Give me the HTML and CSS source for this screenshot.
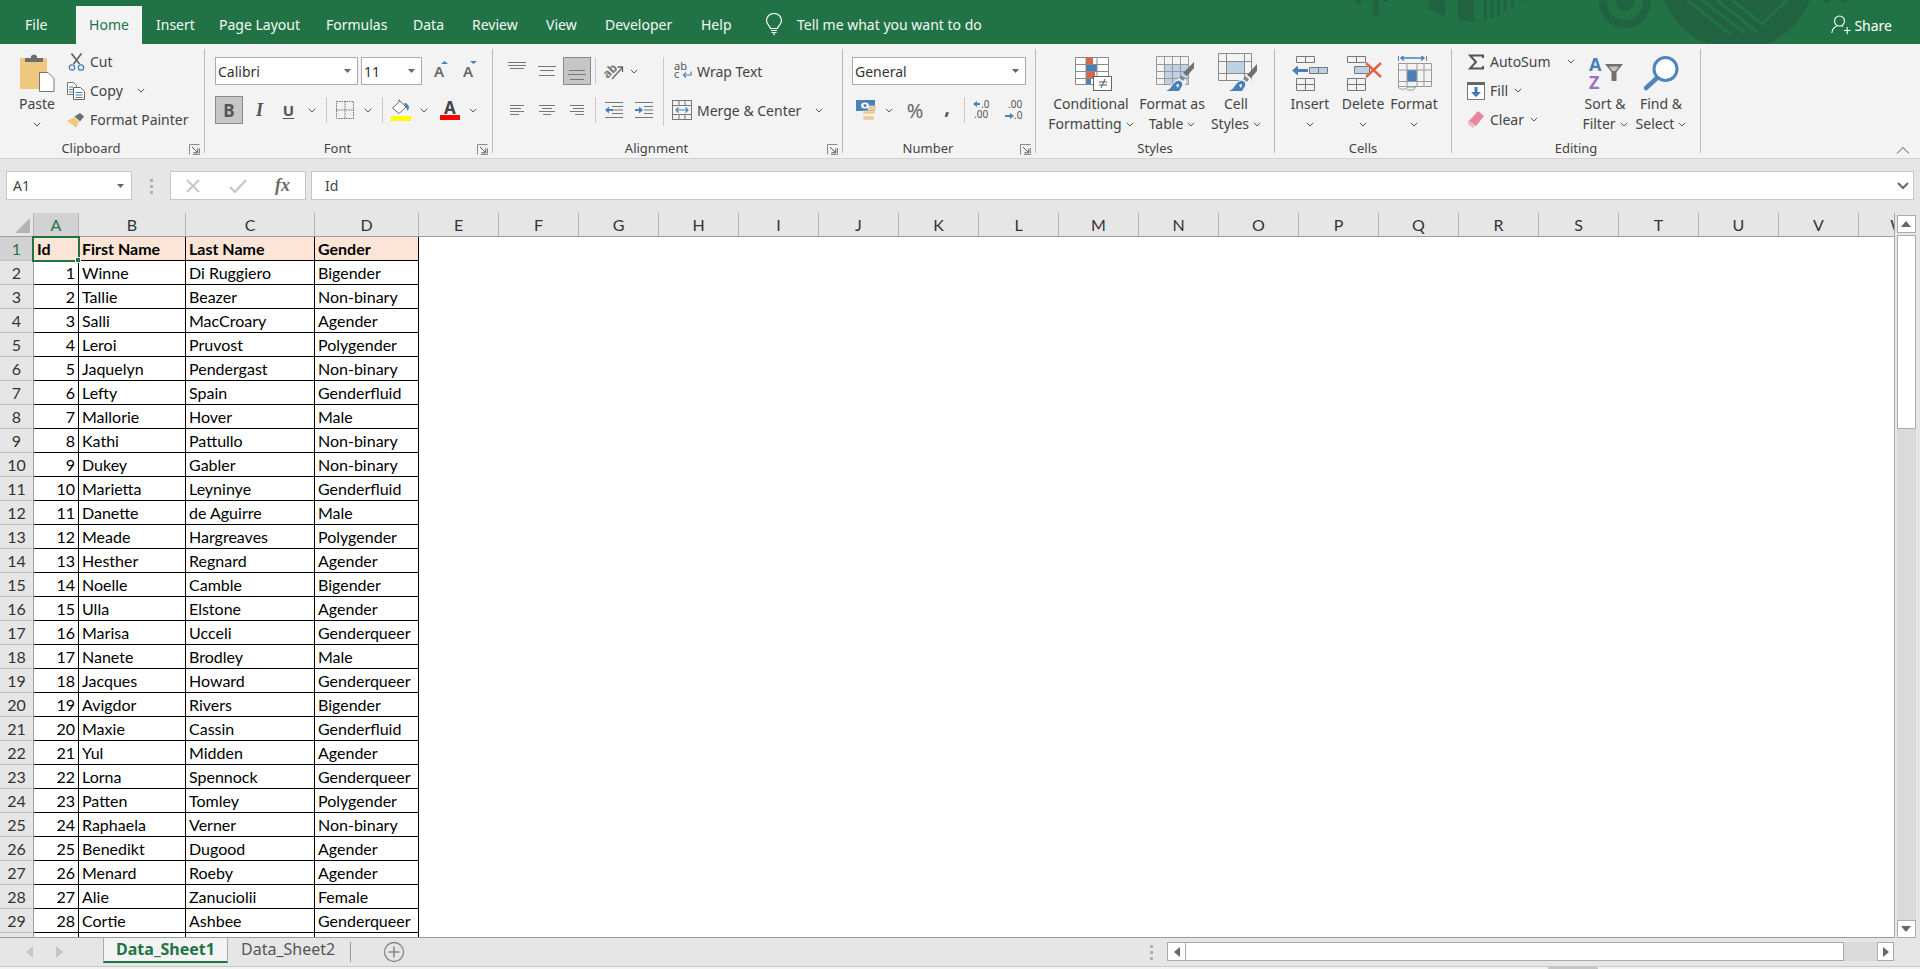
FILE: index.html
```html
<!DOCTYPE html>
<html lang="en">
<head>
<meta charset="utf-8">
<title>Data_Sheet1 - Excel</title>
<link rel="stylesheet" href="styles.css">
</head>
<body>
<svg class="defs" aria-hidden="true">
  <symbol id="chev" viewBox="0 0 8 5"><path d="M.8.8 4 4 7.2.8" fill="none" stroke="#555" stroke-width="1"/></symbol>
  <symbol id="launch" viewBox="0 0 11 11"><path d="M.5 10.5V.5h10M10.5 4v6.5H4" fill="none" stroke="#8a8a8a"/><path d="M3 3l5.5 5.5M8.8 4.5v4.3H4.5" fill="none" stroke="#555"/></symbol>
  <symbol id="tri" viewBox="0 0 9 5"><path d="M0 0h9L4.5 5z" fill="#666"/></symbol>
</svg>
<div class="app">
  <header class="titlebar">
    <svg class="deco" width="1920" height="44" viewBox="0 0 1920 44" aria-hidden="true">
      <g fill="#216240">
        <rect x="1373" y="0" width="6" height="15"/><rect x="1356" y="0" width="5" height="4"/><rect x="1383" y="0" width="5" height="2"/>
        <path d="M1429 0h16v17l-16-8zM1458 0h16v22l-16-2z"/>
        <rect x="1484" width="2.5" height="20"/><rect x="1491" width="2.5" height="18"/><rect x="1497" width="2.5" height="16"/><rect x="1504" width="2.5" height="11"/><rect x="1511" width="2.5" height="8"/><rect x="1519" width="2.5" height="2"/>
        <path fill-rule="evenodd" d="M1599 2a26 26 0 1 0 52 0a26 26 0 1 0-52 0zM1607 2a18 18 0 1 1 36 0a18 18 0 1 1-36 0z"/>
        <circle cx="1625" cy="2" r="9"/>
        <circle cx="1737" cy="-28" r="78"/>
        <path d="M1823 0h8l-4 4zM1840 0h9l-5 4z"/>
      </g>
      <g stroke="#217346" stroke-width="3" fill="none">
        <path d="M1687 0l43 34M1702 0l43 33M1717 0l41 33M1732 0l30 24M1762 24l25-24"/>
      </g>
    </svg>
    <nav class="tabs">
      <span class="tab t-file">File</span>
      <span class="tab active">Home</span>
      <span class="tab t-insert">Insert</span>
      <span class="tab t-page">Page Layout</span>
      <span class="tab t-form">Formulas</span>
      <span class="tab t-data">Data</span>
      <span class="tab t-review">Review</span>
      <span class="tab t-view">View</span>
      <span class="tab t-dev">Developer</span>
      <span class="tab t-help">Help</span>
    </nav>
    <div class="tellme">
      <svg width="18" height="22" viewBox="0 0 18 22" fill="none" stroke="#fff" stroke-width="1.2"><path d="M5.5 15.5C4.8 12.5 1.5 11.5 1.5 7.5a7.5 7 0 0 1 15 0c0 4-3.300 5-4 8z"/><path d="M6 17.500h6M6.500 19.500h5M8 21.200h2"/></svg>
      <span>Tell me what you want to do</span>
    </div>
    <div class="share">
      <svg width="20" height="20" viewBox="0 0 20 20" fill="none" stroke="#fff" stroke-width="1.100"><circle cx="8.500" cy="6" r="5"/><path d="M.8 18c.5-4 2.700-6 5-7M11 11l1 .6M13 15.500h6.500M16.200 12v7.200"/></svg>
      <span>Share</span>
    </div>
  </header>

  <section class="ribbon">
    <div class="group g-clip">
      <div class="gbody">
        <div class="big w38 ml18">
          <div class="bigicon">
            <svg width="36" height="40" viewBox="0 0 36 40"><rect x="1" y="6" width="27" height="31" rx="1" fill="#efc77f"/><path d="M6 10V6h6V4q3-3 6 0v2h6v4z" fill="#6d6d6d"/><path d="M20.500 20.500h8.500l6 6v13h-14.500z" fill="#fff" stroke="#777"/></svg>
          </div>
          <span class="bl">Paste</span>
          <span class="bl"><svg class="chev"><use href="#chev"/></svg></span>
        </div>
        <div class="smallcol ml11">
          <div class="srow"><span class="sicon"><svg width="17" height="18" viewBox="0 0 17 18" fill="none"><path d="M5.500 11 13.500.5M11.500 11 3.500.5" stroke="#666" stroke-width="1.800"/><circle cx="4" cy="14.500" r="2.700" stroke="#4a80b8" stroke-width="1.300"/><circle cx="13" cy="14.500" r="2.700" stroke="#4a80b8" stroke-width="1.300"/></svg></span><span>Cut</span></div>
          <div class="srow"><span class="sicon"><svg width="18" height="18" viewBox="0 0 18 18" fill="none"><path d="M.5.500h6l3 3v9h-9z" fill="#fff" stroke="#777"/><path d="M2 5h4M2 7.500h5M2 10h5" stroke="#4a80b8"/><path d="M6.500 5.500h7l4 4v8h-11z" fill="#fff" stroke="#666"/><path d="M8.500 10.500h7M8.500 13h7M8.500 15.500h7" stroke="#4a80b8"/></svg></span><span>Copy</span><svg class="chev ml14"><use href="#chev"/></svg></div>
          <div class="srow"><span class="sicon"><svg width="18" height="16" viewBox="0 0 18 16"><path d="M0 9 7 5l5 5-3 5.500z" fill="#efc77f"/><path d="M7.500 4.500 13 1l4 3.500-4 5z" fill="#6d6d6d"/></svg></span><span>Format Painter</span></div>
        </div>
      </div>
      <div class="glabel lc">Clipboard<svg class="launcher"><use href="#launch"/></svg></div>
    </div>

    <div class="group g-font">
      <div class="gbody col pl10 pt8">
        <div class="trow">
          <div class="combo w143"><span>Calibri</span><svg class="tri"><use href="#tri"/></svg></div>
          <div class="combo w61 ml3"><span>11</span><svg class="tri"><use href="#tri"/></svg></div>
          <span class="cell w26 ml6"><svg width="18" height="24" viewBox="0 0 18 24"><path d="M9 5l3.500-3L16 5z" fill="#4a80b8"/><text x="2" y="18" class="gly">A</text></svg></span>
          <span class="cell w26 ml3"><svg width="18" height="24" viewBox="0 0 18 24"><path d="M9 2h7l-3.500 3z" fill="#4a80b8"/><text x="2" y="18" class="gly">A</text></svg></span>
        </div>
        <div class="trow mt11">
          <span class="cell w28 pressed fmt-b">B</span>
          <span class="cell w33 fmt-i">I</span>
          <span class="cell w25 fmt-u">U</span>
          <span class="cell w22"><svg class="chev"><use href="#chev"/></svg></span>
          <span class="cell w6"><i class="vsep"></i></span>
          <span class="cell w32"><svg width="18" height="18" viewBox="0 0 18 18" fill="none" stroke="#6f6f6f" stroke-dasharray="1.500 1"><rect x=".5" y=".5" width="17" height="17"/><path d="M9 0v18M0 9h18"/></svg></span>
          <span class="cell w14"><svg class="chev"><use href="#chev"/></svg></span>
          <span class="cell w14"><i class="vsep"></i></span>
          <span class="cell w24"><svg width="20" height="22" viewBox="0 0 20 22"><path d="M1.500 9 9 2l6 6-7 6.500z" fill="#fff" stroke="#666"/><path d="M7 2l2-1.500" stroke="#666"/><path d="M13 4c3 0 5 2 5 5l-1.500 3-1-3z" fill="#4a80b8"/><rect y="17" width="20" height="5" fill="#ffff00"/></svg></span>
          <span class="cell w22"><svg class="chev"><use href="#chev"/></svg></span>
          <span class="cell w30"><svg width="20" height="30" viewBox="0 0 20 30"><text x="10" y="19" class="gly2">A</text><rect y="20" width="20" height="5" fill="#ff0000"/></svg></span>
          <span class="cell w16"><svg class="chev"><use href="#chev"/></svg></span>
        </div>
      </div>
      <div class="glabel lc">Font<svg class="launcher"><use href="#launch"/></svg></div>
    </div>

    <div class="group g-align">
      <div class="gbody pl10 pt8">
        <div class="alignleft">
          <div class="trow">
            <span class="cell w28"><svg width="18" height="28" viewBox="0 0 18 28" stroke="#777"><path d="M0 5.500h18M0 8.500h18M2 11.500h14"/></svg></span>
            <span class="cell w32"><svg width="18" height="28" viewBox="0 0 18 28" stroke="#777"><path d="M0 9.500h18M2 13.500h14M1 18.500h16"/></svg></span>
            <span class="cell w28 pressed"><svg width="18" height="26" viewBox="0 0 18 26" stroke="#777"><path d="M1 12.500h16M0 16.500h18M2 21.500h14"/></svg></span>
            <span class="cell w8"><i class="vsep"></i></span>
            <span class="cell w30"><svg width="22" height="24" viewBox="0 0 22 24"><text x="0" y="17" class="gly3" transform="rotate(-45 6 13)">ab</text><path d="M9 20 19 9M14.500 8h5v5" fill="none" stroke="#666" stroke-width="1.300"/></svg></span>
            <span class="cell w10"><svg class="chev"><use href="#chev"/></svg></span>
          </div>
          <div class="trow mt11">
            <span class="cell w28"><svg width="14" height="12" viewBox="0 0 14 12" stroke="#777"><path d="M0 1.500h14M0 4.500h11M0 7.500h14M0 10.500h9"/></svg></span>
            <span class="cell w32"><svg width="16" height="12" viewBox="0 0 16 12" stroke="#777"><path d="M0 1.500h16M3 4.500h10M0 7.500h16M4 10.500h8"/></svg></span>
            <span class="cell w28"><svg width="14" height="12" viewBox="0 0 14 12" stroke="#777"><path d="M0 1.500h14M3 4.500h11M0 7.500h14M5 10.500h9"/></svg></span>
            <span class="cell w8"><i class="vsep"></i></span>
            <span class="cell w30"><svg width="18" height="16" viewBox="0 0 18 16"><path d="M0 .500h18M7 4.500h11M7 8h11M7 11.500h11M0 15.500h18" stroke="#777"/><path d="M0 8l4-3.500V7h4v2H4v2.500z" fill="#4a80b8"/></svg></span>
            <span class="cell w30"><svg width="18" height="16" viewBox="0 0 18 16"><path d="M0 .500h18M9 4.500h9M9 8h9M9 11.500h9M0 15.500h18" stroke="#777"/><path d="M8 8 4 4.500V7H0v2h4v2.500z" fill="#4a80b8"/></svg></span>
          </div>
        </div>
        <i class="vsep tall"></i>
        <div class="alignright">
          <div class="srow tbrow"><span class="wicon"><svg width="18" height="22" viewBox="0 0 18 22"><text class="gly4"><tspan x="0" y="10">ab</tspan><tspan x="0" y="18">c</tspan></text><path d="M17 11.500v3.500H10M12 12.500 9.500 15l2.500 2.500" fill="none" stroke="#4a80b8" stroke-width="1.200"/></svg></span><span>Wrap Text</span></div>
          <div class="srow tbrow mt11"><span class="wicon"><svg width="20" height="20" viewBox="0 0 20 20" fill="none"><rect x=".5" y=".5" width="19" height="19" stroke="#777"/><path d="M0 5.500h20M0 14.500h20M7 0v5M13 0v5M7 15v5M13 15v5" stroke="#777"/><path d="M4 10h12M6.500 7.500 4 10l2.500 2.500M13.500 7.500 16 10l-2.500 2.500" stroke="#4a80b8" stroke-width="1.200"/></svg></span><span>Merge &amp; Center</span><svg class="chev ml14"><use href="#chev"/></svg></div>
        </div>
      </div>
      <div class="glabel lc">Alignment<svg class="launcher"><use href="#launch"/></svg></div>
    </div>

    <div class="group g-num">
      <div class="gbody col pl9 pt8">
        <div class="trow"><div class="combo w174"><span>General</span><svg class="tri"><use href="#tri"/></svg></div></div>
        <div class="trow mt11">
          <span class="cell w28"><svg width="20" height="21" viewBox="0 0 20 21"><rect x="0" y="0" width="19" height="11" fill="#4a80b8"/><ellipse cx="9" cy="5.500" rx="4" ry="3" fill="#fff"/><circle cx="9" cy="5.500" r="1.500" fill="#4a80b8"/><path d="M7 11h12v3H7zM12 6h8v4h-8zM7 16h11v4H7z" fill="#f0c88a" stroke="#f3f3f3" stroke-width=".6"/></svg></span>
          <span class="cell w18"><svg class="chev"><use href="#chev"/></svg></span>
          <span class="cell w34 pct">%</span>
          <span class="cell w30 cma">,</span>
          <span class="cell w4"><i class="vsep"></i></span>
          <span class="cell w32"><svg width="18" height="24" viewBox="0 0 18 24"><path d="M0 6l4-3v2h3v2H4v2z" fill="#4a80b8"/><text class="gly5"><tspan x="8" y="10">.0</tspan><tspan x="1" y="20">.00</tspan></text></svg></span>
          <span class="cell w32"><svg width="18" height="24" viewBox="0 0 18 24"><path d="M0 17h5v-2l4 3-4 3v-2H0z" fill="#4a80b8"/><text class="gly5"><tspan x="3" y="10">.00</tspan><tspan x="9" y="21">.0</tspan></text></svg></span>
        </div>
      </div>
      <div class="glabel lc">Number<svg class="launcher"><use href="#launch"/></svg></div>
    </div>

    <div class="group g-styles">
      <div class="gbody pl12">
        <div class="big w86">
          <div class="bigicon"><svg width="46" height="36" viewBox="1068 56 46 36">
            <path fill="#fff" d="M1075 57h34v28h-34z"/>
            <path d="M1086 57.500h7v6.500h-7z" fill="#de6444"/><path d="M1086 64h11v7h-11z" fill="#4a80b8"/><path d="M1086 71h9v7h-9z" fill="#de6444"/><path d="M1086 78h5v7h-5z" fill="#4a80b8"/>
            <path d="M1075.500 57.500h33v27h-33zM1086 57v28M1097 57v28M1075 64.500h34M1075 71.500h34M1075 78.500h34" fill="none" stroke="#8a8a8a"/>
            <rect x="1093.500" y="76.500" width="18" height="14" fill="#fff" stroke="#666"/><path d="M1099 82h8M1099 85h8M1105 79l-4 9" stroke="#555" fill="none"/></svg></div>
          <span class="bl">Conditional</span>
          <span class="bl">Formatting <svg class="chev"><use href="#chev"/></svg></span>
        </div>
        <div class="big w66 ml5">
          <div class="bigicon"><svg width="46" height="36" viewBox="1149 56 46 36">
            <path d="M1164 64h25v21h-25z" fill="#bcd0e6"/>
            <path d="M1156.500 56.500h32v28h-32zM1164.500 56v29M1172.500 56v29M1180.500 56v29M1156 64.500h33M1156 71.500h33M1156 78.500h33" fill="none" stroke="#9a9a9a"/>
            <path d="M1163 92l17-15 6 3-2 12z" fill="#f3f3f3"/>
            <path d="M1194 62v6l-7 8-4-3z" fill="#707070"/><path d="M1181 75l4 3-2 3-4-3z" fill="#888"/>
            <path d="M1166 91c6-2 6-8 11-10 4-1 6 2 5 5l-3 5z" fill="#4a80b8"/><path d="M1176 85c1-1 3-1 3 0l-1 3z" fill="#fff"/></svg></div>
          <span class="bl">Format as</span>
          <span class="bl">Table <svg class="chev"><use href="#chev"/></svg></span>
        </div>
        <div class="big w52 ml5">
          <div class="bigicon"><svg width="46" height="40" viewBox="1213 52 46 40">
            <path d="M1226 61h18v12h-18z" fill="#bcd0e6"/>
            <path d="M1218.500 53.500h33v27h-33zM1226.500 53v28M1244.500 53v28M1218 61.500h34M1218 73.500h34" fill="none" stroke="#8a8a8a"/>
            <path d="M1226 92l17-15 9 2-4 13z" fill="#f3f3f3"/>
            <path d="M1257 64v7l-6 7-4-3z" fill="#707070"/><path d="M1245 76l4 3-2 3-4-3z" fill="#888"/>
            <path d="M1229 91c6-2 6-8 11-10 4-1 6 2 5 5l-3 5z" fill="#4a80b8"/><path d="M1239 85c1-1 3-1 3 0l-1 3z" fill="#fff"/></svg></div>
          <span class="bl">Cell</span>
          <span class="bl">Styles <svg class="chev"><use href="#chev"/></svg></span>
        </div>
      </div>
      <div class="glabel">Styles</div>
    </div>

    <div class="group g-cells">
      <div class="gbody pl15">
        <div class="big w40">
          <div class="bigicon"><svg width="46" height="36" viewBox="1287 54 46 36" fill="none">
            <path d="M1296.500 54.500h18v6h-18zM1305.500 54v6M1296.500 76.500h18v12h-18zM1305.500 76v12M1296 82.500h19" stroke="#777"/>
            <path d="M1309.500 65.500h9v6h-9zM1318.500 65.500h9v6h-9z" fill="#bcd0e6" stroke="#777"/>
            <path d="M1292 68.500l6-5v3.500h10v3h-10v3.500z" fill="#4a80b8"/></svg></div>
          <span class="bl">Insert</span>
          <span class="bl"><svg class="chev"><use href="#chev"/></svg></span>
        </div>
        <div class="big w44 ml11">
          <div class="bigicon"><svg width="46" height="36" viewBox="1340 54 46 36" fill="none">
            <path d="M1347.500 54.500h18v6h-18zM1356.500 54v6M1347.500 76.500h18v12h-18zM1356.500 76v12M1347 82.500h19" stroke="#777"/>
            <path d="M1354.500 64.500h15v7h-15z" fill="#bcd0e6" stroke="#777"/>
            <path d="M1366 61l15 14M1381 61l-15 14" stroke="#de6444" stroke-width="2.400"/></svg></div>
          <span class="bl">Delete</span>
          <span class="bl"><svg class="chev"><use href="#chev"/></svg></span>
        </div>
        <div class="big w46 ml6">
          <div class="bigicon"><svg width="46" height="36" viewBox="1391 54 46 36" fill="none">
            <path d="M1398.500 53v6M1426.500 53v6" stroke="#4a80b8"/><path d="M1401 56h23M1404 53.500l-3 2.500 3 2.500M1421 53.500l3 2.500-3 2.500" stroke="#4a80b8" stroke-width="1.400"/>
            <path d="M1407 68h10v12h-10z" fill="#4a80b8"/>
            <path d="M1398.500 61.500h33v23h-33zM1407 61v23M1417 61v23M1424 61v23M1398 68h34M1398 79.500h34" stroke="#9a9a9a"/>
            <path d="M1398 85c2 3 8 3 10 0h8l-3 3h-6" stroke="#9a9a9a"/></svg></div>
          <span class="bl">Format</span>
          <span class="bl"><svg class="chev"><use href="#chev"/></svg></span>
        </div>
      </div>
      <div class="glabel">Cells</div>
    </div>

    <div class="group g-edit">
      <div class="gbody">
        <div class="smallcol ml15 w113">
          <div class="srow"><span class="sicon"><svg width="16" height="16" viewBox="0 0 16 16" fill="none"><path d="M15 4V1.500H2L8 8l-6 6.500h13V12" stroke="#555" stroke-width="2"/></svg></span><span>AutoSum</span><svg class="chev ml16"><use href="#chev"/></svg></div>
          <div class="srow"><span class="sicon"><svg width="18" height="18" viewBox="0 0 18 18"><rect x=".5" y=".5" width="17" height="17" fill="#fff" stroke="#777"/><rect width="18" height="3" fill="#666"/><path d="M7.500 5h3v5H14l-5 5-5-5h3.500z" fill="#3d78b8"/></svg></span><span>Fill</span><svg class="chev ml6"><use href="#chev"/></svg></div>
          <div class="srow"><span class="sicon"><svg width="18" height="17" viewBox="0 0 18 17"><path d="M11 0l6 5-8 10-7-5z" fill="#e8879b"/><path d="M1 9l7 6-2 2-5-4z" fill="#f0b4c0"/></svg></span><span>Clear</span><svg class="chev ml6"><use href="#chev"/></svg></div>
        </div>
        <div class="big w50">
          <div class="bigicon"><svg width="46" height="40" viewBox="1581 50 46 40">
            <text class="az"><tspan x="1588" y="69" class="az1">A</tspan><tspan x="1588" y="87" class="az2">Z</tspan></text>
            <path d="M1604 62h18l-6.500 8v9h-5v-9z" fill="#707070"/><path d="M1608 64.500h10l-3.500 4.500h-3z" fill="#c4c4c4"/></svg></div>
          <span class="bl">Sort &amp;</span>
          <span class="bl">Filter <svg class="chev"><use href="#chev"/></svg></span>
        </div>
        <div class="big w54 ml4">
          <div class="bigicon"><svg width="46" height="36" viewBox="1637 54 46 36" fill="none">
            <circle cx="1664.500" cy="67" r="11.500" fill="#fff" stroke="#4e85bd" stroke-width="3"/>
            <path d="M1656 76l-11 10" stroke="#4e85bd" stroke-width="4.500" stroke-linecap="round"/></svg></div>
          <span class="bl">Find &amp;</span>
          <span class="bl">Select <svg class="chev"><use href="#chev"/></svg></span>
        </div>
      </div>
      <div class="glabel">Editing</div>
    </div>
    <svg class="collapse" width="14" height="8" viewBox="0 0 14 8" fill="none" stroke="#555"><path d="M1 7.500 7 1.500l6 6"/></svg>
  </section>

  <section class="formula">
    <div class="namebox"><span>A1</span><svg class="tri"><use href="#tri"/></svg></div>
    <div class="dots"><i></i><i></i><i></i></div>
    <div class="fxbox">
      <svg width="16" height="16" viewBox="0 0 16 16" fill="none" stroke="#c8c8c8" stroke-width="2"><path d="M2 2l12 12M14 2 2 14"/></svg>
      <svg width="18" height="14" viewBox="0 0 18 14" fill="none" stroke="#c8c8c8" stroke-width="2.400"><path d="M1 8l5 5L17 1"/></svg>
      <span class="fx">fx</span>
    </div>
    <div class="finput"><span>Id</span><svg class="fdrop" width="12" height="8" viewBox="0 0 12 8" fill="none" stroke="#666" stroke-width="2"><path d="M1 1l5 5 5-5"/></svg></div>
  </section>

  <main class="main">
    <div class="sheet">
      <div class="colheads">
        <span class="corner"><svg width="16" height="15" viewBox="0 0 16 15"><path d="M15 0v15H0z" fill="#b4b4b4"/></svg></span>
        <span class="ch ca sel">A</span><span class="ch cb">B</span><span class="ch cc">C</span><span class="ch cd">D</span>
        <span class="ch">E</span><span class="ch">F</span><span class="ch">G</span><span class="ch">H</span><span class="ch">I</span><span class="ch">J</span><span class="ch">K</span><span class="ch">L</span><span class="ch">M</span><span class="ch">N</span><span class="ch">O</span><span class="ch">P</span><span class="ch">Q</span><span class="ch">R</span><span class="ch">S</span><span class="ch">T</span><span class="ch">U</span><span class="ch">V</span><span class="ch">W</span>
      </div>
      <div class="grid">
        <div class="selbox"><i class="handle"></i></div>
        <div class="rh sel">1</div><div class="c hd">Id</div><div class="c hd">First Name</div><div class="c hd">Last Name</div><div class="c hd">Gender</div>
        <div class="rh">2</div><div class="c n">1</div><div class="c">Winne</div><div class="c">Di Ruggiero</div><div class="c">Bigender</div>
        <div class="rh">3</div><div class="c n">2</div><div class="c">Tallie</div><div class="c">Beazer</div><div class="c">Non-binary</div>
        <div class="rh">4</div><div class="c n">3</div><div class="c">Salli</div><div class="c">MacCroary</div><div class="c">Agender</div>
        <div class="rh">5</div><div class="c n">4</div><div class="c">Leroi</div><div class="c">Pruvost</div><div class="c">Polygender</div>
        <div class="rh">6</div><div class="c n">5</div><div class="c">Jaquelyn</div><div class="c">Pendergast</div><div class="c">Non-binary</div>
        <div class="rh">7</div><div class="c n">6</div><div class="c">Lefty</div><div class="c">Spain</div><div class="c">Genderfluid</div>
        <div class="rh">8</div><div class="c n">7</div><div class="c">Mallorie</div><div class="c">Hover</div><div class="c">Male</div>
        <div class="rh">9</div><div class="c n">8</div><div class="c">Kathi</div><div class="c">Pattullo</div><div class="c">Non-binary</div>
        <div class="rh">10</div><div class="c n">9</div><div class="c">Dukey</div><div class="c">Gabler</div><div class="c">Non-binary</div>
        <div class="rh">11</div><div class="c n">10</div><div class="c">Marietta</div><div class="c">Leyninye</div><div class="c">Genderfluid</div>
        <div class="rh">12</div><div class="c n">11</div><div class="c">Danette</div><div class="c">de Aguirre</div><div class="c">Male</div>
        <div class="rh">13</div><div class="c n">12</div><div class="c">Meade</div><div class="c">Hargreaves</div><div class="c">Polygender</div>
        <div class="rh">14</div><div class="c n">13</div><div class="c">Hesther</div><div class="c">Regnard</div><div class="c">Agender</div>
        <div class="rh">15</div><div class="c n">14</div><div class="c">Noelle</div><div class="c">Camble</div><div class="c">Bigender</div>
        <div class="rh">16</div><div class="c n">15</div><div class="c">Ulla</div><div class="c">Elstone</div><div class="c">Agender</div>
        <div class="rh">17</div><div class="c n">16</div><div class="c">Marisa</div><div class="c">Ucceli</div><div class="c">Genderqueer</div>
        <div class="rh">18</div><div class="c n">17</div><div class="c">Nanete</div><div class="c">Brodley</div><div class="c">Male</div>
        <div class="rh">19</div><div class="c n">18</div><div class="c">Jacques</div><div class="c">Howard</div><div class="c">Genderqueer</div>
        <div class="rh">20</div><div class="c n">19</div><div class="c">Avigdor</div><div class="c">Rivers</div><div class="c">Bigender</div>
        <div class="rh">21</div><div class="c n">20</div><div class="c">Maxie</div><div class="c">Cassin</div><div class="c">Genderfluid</div>
        <div class="rh">22</div><div class="c n">21</div><div class="c">Yul</div><div class="c">Midden</div><div class="c">Agender</div>
        <div class="rh">23</div><div class="c n">22</div><div class="c">Lorna</div><div class="c">Spennock</div><div class="c">Genderqueer</div>
        <div class="rh">24</div><div class="c n">23</div><div class="c">Patten</div><div class="c">Tomley</div><div class="c">Polygender</div>
        <div class="rh">25</div><div class="c n">24</div><div class="c">Raphaela</div><div class="c">Verner</div><div class="c">Non-binary</div>
        <div class="rh">26</div><div class="c n">25</div><div class="c">Benedikt</div><div class="c">Dugood</div><div class="c">Agender</div>
        <div class="rh">27</div><div class="c n">26</div><div class="c">Menard</div><div class="c">Roeby</div><div class="c">Agender</div>
        <div class="rh">28</div><div class="c n">27</div><div class="c">Alie</div><div class="c">Zanuciolii</div><div class="c">Female</div>
        <div class="rh">29</div><div class="c n">28</div><div class="c">Cortie</div><div class="c">Ashbee</div><div class="c">Genderqueer</div>
        <div class="rh"></div><div class="c"></div><div class="c"></div><div class="c"></div><div class="c"></div>
      </div>
    </div>
    <div class="vscroll">
      <div class="sbtn"><svg width="10" height="6" viewBox="0 0 10 6"><path d="M0 6 5 0l5 6z" fill="#666"/></svg></div>
      <div class="vthumb"></div>
      <div class="vtrack"></div>
      <div class="sbtn"><svg width="10" height="6" viewBox="0 0 10 6"><path d="M0 0h10L5 6z" fill="#666"/></svg></div>
    </div>
  </main>

  <footer class="tabbar">
    <div class="navs">
      <svg width="8" height="12" viewBox="0 0 8 12"><path d="M7 0v12L0 6z" fill="#c6c6c6"/></svg>
      <svg width="8" height="12" viewBox="0 0 8 12"><path d="M1 0v12l7-6z" fill="#c6c6c6"/></svg>
    </div>
    <span class="stab on">Data_Sheet1</span>
    <span class="stab off">Data_Sheet2</span>
    <i class="stabsep"></i>
    <svg class="plus" width="22" height="22" viewBox="0 0 22 22" fill="none" stroke="#888"><circle cx="11" cy="11" r="9.500" stroke-width="1.300"/><path d="M11 5.500v11M5.500 11h11" stroke-width="1.600"/></svg>
    <div class="dots tabdots"><i></i><i></i><i></i></div>
    <div class="hscroll">
      <div class="hbtn"><svg width="6" height="10" viewBox="0 0 6 10"><path d="M6 0v10L0 5z" fill="#666"/></svg></div>
      <div class="hthumb"></div>
      <div class="htrack"></div>
      <div class="hbtn"><svg width="6" height="10" viewBox="0 0 6 10"><path d="M0 0v10l6-5z" fill="#666"/></svg></div>
    </div>
  </footer>
  <div class="statusedge"><i></i></div>
</div>
</body>
</html>
```
FILE: styles.css
```css
* { box-sizing: border-box; }
html, body { margin: 0; padding: 0; background: #f3f3f3; }
body { font-family: "Noto Sans", "Open Sans", sans-serif; font-size: 14px; color: #444; overflow: hidden; }
.defs { display: none; }
i { font-style: normal; }
.app { width: 1920px; height: 969px; display: flex; flex-direction: column; overflow: hidden; }

/* title bar */
.titlebar { height: 44px; background: #217346; color: #fff; display: flex; align-items: flex-end; position: relative; flex: none; padding-left: 12px; }
.deco { position: absolute; left: 0; top: 0; }
.tabs { display: flex; height: 38px; position: relative; }
.tab { padding-left: 13px; line-height: 37px; white-space: nowrap; color: #f4f8f5; flex: none; }
.tab.active { background: #f3f3f3; color: #217346; width: 66px; padding: 0; text-align: center; }
.t-file { width: 64px; }
.t-insert { width: 64px; padding-left: 14px; }
.t-page { width: 107px; }
.t-form { width: 87px; }
.t-data { width: 59px; }
.t-review { width: 74px; }
.t-view { width: 59px; }
.t-dev { width: 96px; }
.t-help { width: 64px; }
.tellme { display: flex; align-items: center; gap: 14px; height: 38px; margin-left: 13px; position: relative; color: #f4f8f5; padding-bottom: 2px; }
.share { position: absolute; right: 28px; top: 15px; display: flex; align-items: center; gap: 3px; }

/* ribbon */
.ribbon { height: 115px; flex: none; background: #f3f3f3; border-bottom: 1px solid #d2d2d2; display: flex; padding-top: 5px; position: relative; }
.group { height: 104px; border-right: 1px solid #b9b9b9; position: relative; flex: none; display: flex; flex-direction: column; }
.g-clip { width: 205px; }
.g-font { width: 288px; }
.g-align { width: 350px; }
.g-num { width: 193px; }
.g-styles { width: 239px; }
.g-cells { width: 177px; }
.g-edit { width: 249px; }
.gbody { height: 90px; display: flex; flex: none; }
.gbody.col { flex-direction: column; }
.glabel { height: 18px; line-height: 18px; text-align: center; font-size: 13px; color: #444; position: relative; flex: none; }
.glabel.lc { padding-right: 22px; }
.launcher { position: absolute; right: 4px; top: 5px; width: 11px; height: 11px; }
.collapse { position: absolute; right: 10px; top: 102px; }

.big { display: flex; flex-direction: column; align-items: center; flex: none; white-space: nowrap; }
.bigicon { height: 45px; padding-bottom: 2px; display: flex; align-items: flex-end; justify-content: center; }
.bl { height: 20px; line-height: 20px; display: flex; align-items: center; gap: 4px; }
.smallcol { display: flex; flex-direction: column; flex: none; margin-top: -2px; }
.srow { height: 29px; display: flex; align-items: center; white-space: nowrap; }
.sicon { width: 18px; margin-right: 5px; display: flex; justify-content: center; }
.chev { width: 8px; height: 5px; flex: none; }
.trow { display: flex; height: 28px; align-items: center; }
.cell { display: flex; align-items: center; justify-content: center; height: 28px; flex: none; }
.combo { height: 28px; background: #fff; border: 1px solid #ababab; display: flex; align-items: center; justify-content: space-between; padding: 0 6px 0 2px; flex: none; color: #333; }
.tri { width: 7px; height: 4px; flex: none; }
.pressed { background: #c6c6c6; border: 1px solid #8a8a8a; }
.vsep { display: block; width: 1px; height: 26px; background: #c8c8c8; }
.vsep.tall { height: 69px; }
.fmt-b { font-weight: 700; font-size: 17px; color: #555; }
.fmt-i { font-family: "Liberation Serif", serif; font-style: italic; font-weight: 700; font-size: 18px; color: #555; }
.fmt-u { font-weight: 700; font-size: 15px; color: #555; text-decoration: underline; text-underline-offset: 2px; }
.pct { font-size: 20px; color: #666; }
.cma { font-size: 20px; font-weight: 700; color: #555; padding-bottom: 8px; }
.gly { font: 600 15px "Noto Sans", sans-serif; fill: #666; }
.gly2 { font: 700 17px "Noto Sans", sans-serif; fill: #444; text-anchor: middle; }
.gly3 { font: 700 12px "Noto Sans", sans-serif; fill: #777; }
.gly4 { font: 11px "Noto Sans", sans-serif; fill: #555; }
.gly5 { font: 10px "Noto Sans", sans-serif; fill: #555; }
.az { font: 700 18px "Noto Sans", sans-serif; }
.az1 { fill: #4a80ba; }
.az2 { fill: #9d6fbf; }
.alignleft { width: 160px; flex: none; }
.tbrow { height: 28px; }
.wicon { width: 33px; padding-right: 5px; display: flex; justify-content: flex-end; flex: none; }

.pl9 { padding-left: 9px; } .pl10 { padding-left: 10px; } .pl12 { padding-left: 12px; } .pl15 { padding-left: 15px; }
.pt8 { padding-top: 8px; } .mt11 { margin-top: 11px; }
.ml3 { margin-left: 3px; } .ml4 { margin-left: 4px; } .ml5 { margin-left: 5px; } .ml6 { margin-left: 6px; } .ml11 { margin-left: 11px; } .ml14 { margin-left: 14px; } .ml15 { margin-left: 15px; } .ml16 { margin-left: 16px; } .ml18 { margin-left: 18px; }
.w4 { width: 4px; } .w6 { width: 6px; } .w8 { width: 8px; } .w10 { width: 10px; } .w14 { width: 14px; } .w16 { width: 16px; } .w18 { width: 18px; } .w22 { width: 22px; } .w24 { width: 24px; } .w25 { width: 25px; } .w26 { width: 26px; } .w28 { width: 28px; } .w30 { width: 30px; } .w32 { width: 32px; } .w33 { width: 33px; } .w34 { width: 34px; } .w38 { width: 38px; } .w40 { width: 40px; } .w44 { width: 44px; } .w46 { width: 46px; } .w50 { width: 50px; } .w52 { width: 52px; } .w54 { width: 54px; } .w61 { width: 61px; } .w66 { width: 66px; } .w86 { width: 86px; } .w113 { width: 113px; } .w143 { width: 143px; } .w174 { width: 174px; }

/* formula bar */
.formula { height: 54px; flex: none; background: #e6e6e6; display: flex; padding: 12px 6px 12px 6px; }
.namebox { width: 126px; height: 29px; background: #fff; border: 1px solid #c6c6c6; display: flex; align-items: center; justify-content: space-between; padding: 0 7px 0 6px; color: #444; flex: none; }
.dots { display: flex; flex-direction: column; justify-content: center; gap: 3px; }
.dots i { display: block; width: 3px; height: 3px; background: #b0b0b0; }
.formula .dots { width: 38px; align-items: center; }
.fxbox { width: 136px; height: 29px; background: #fff; border: 1px solid #c6c6c6; display: flex; align-items: center; justify-content: space-between; padding: 0 15px 0 14px; flex: none; }
.fx { font: italic 700 18px "Liberation Serif", serif; color: #6a6a6a; }
.finput { flex: none; width: 1603px; margin-left: 5px; height: 29px; background: #fff; border: 1px solid #c6c6c6; display: flex; align-items: center; justify-content: space-between; padding: 0 4px 0 13px; }

/* sheet */
.main { height: 725px; flex: none; display: flex; background: #e6e6e6; }
.sheet { width: 1895px; flex: none; overflow: hidden; background: #fff; border-right: 1px solid #a8a8a8; border-bottom: 1px solid #9a9a9a; }
.colheads { display: flex; height: 24px; background: #e6e6e6; border-bottom: 1px solid #9e9e9e; width: 1950px; font-family: "Lato", sans-serif; font-size: 16px; color: #333; }
.corner { width: 34px; flex: none; display: flex; padding: 5px 0 0 15px; border-right: 1px solid #b4b4b4; }
.ch { width: 80px; flex: none; text-align: center; line-height: 23px; border-right: 1px solid #b4b4b4; }
.ch.ca { width: 45px; } .ch.cb { width: 107px; } .ch.cc { width: 129px; } .ch.cd { width: 104px; }
.ch.sel { background: #d2d2d2; color: #217346; }
.grid { display: grid; grid-template-columns: 34px 45px 107px 129px 104px; grid-auto-rows: 24px; width: 419px; position: relative; font-family: "Lato", sans-serif; font-size: 16px; color: #000; }
.rh { background: #e6e6e6; border-right: 1px solid #9e9e9e; border-bottom: 1px solid #bdbdbd; text-align: center; line-height: 23px; color: #333; }
.rh.sel { background: #d2d2d2; color: #217346; }
.c { border-right: 1px solid #000; border-bottom: 1px solid #000; padding: 0 3px 0 3px; line-height: 23px; white-space: nowrap; overflow: hidden; }
.c.n { text-align: right; padding-right: 3px; }
.c.hd { background: #fce4d6; font-weight: 700; }
.selbox { position: absolute; left: 32px; top: -1px; width: 48px; height: 26px; border: 2px solid #217346; pointer-events: none; }
.handle { position: absolute; right: -3px; bottom: -3px; width: 6px; height: 6px; background: #217346; border: 1px solid #fff; }

/* scrollbars */
.vscroll { width: 25px; flex: none; display: flex; flex-direction: column; align-items: center; padding: 2px 3px 0 0; }
.sbtn { width: 19px; height: 18px; flex: none; background: #fff; border: 1px solid #ababab; display: flex; align-items: center; justify-content: center; }
.vthumb { width: 19px; height: 194px; flex: none; margin-top: 2px; background: #fff; border: 1px solid #ababab; }
.vtrack { flex: 1; width: 19px; background: #dadada; }

/* sheet tabs */
.tabbar { height: 28px; flex: none; background: #e6e6e6; display: flex; align-items: flex-start; font-size: 16px; }
.navs { width: 103px; height: 28px; flex: none; display: flex; align-items: center; gap: 21px; padding-left: 26px; }
.stab { height: 24px; line-height: 22px; color: #555; flex: none; white-space: nowrap; }
.stab.off { width: 120px; padding-left: 13px; }
.stab.on { width: 125px; height: 25px; background: #f3f3f3; color: #217346; font-weight: 700; border: 1px solid #ababab; border-top: 0; border-bottom: 2px solid #217346; text-align: center; }
.stabsep { display: block; width: 1px; height: 20px; margin: 4px 0 0 2px; background: #9a9a9a; flex: none; }
.plus { margin: 3px 0 0 32px; flex: none; }
.tabdots { height: 28px; margin-left: 745px; flex: none; }
.hscroll { width: 727px; height: 19px; margin: 4px 0 0 14px; flex: none; display: flex; background: #dadada; }
.hbtn { width: 19px; height: 19px; flex: none; background: #fff; border: 1px solid #ababab; display: flex; align-items: center; justify-content: center; }
.hbtn:last-child { width: 17px; }
.hthumb { width: 658px; height: 19px; flex: none; background: #fff; border: 1px solid #ababab; border-left: 0; }
.htrack { flex: 1; }
.statusedge { flex: 1; border-top: 1px solid #c8c8c8; background: #f3f3f3; padding-left: 1548px; }
.statusedge i { display: block; width: 50px; height: 3px; background: #c6c6c6; }
```
